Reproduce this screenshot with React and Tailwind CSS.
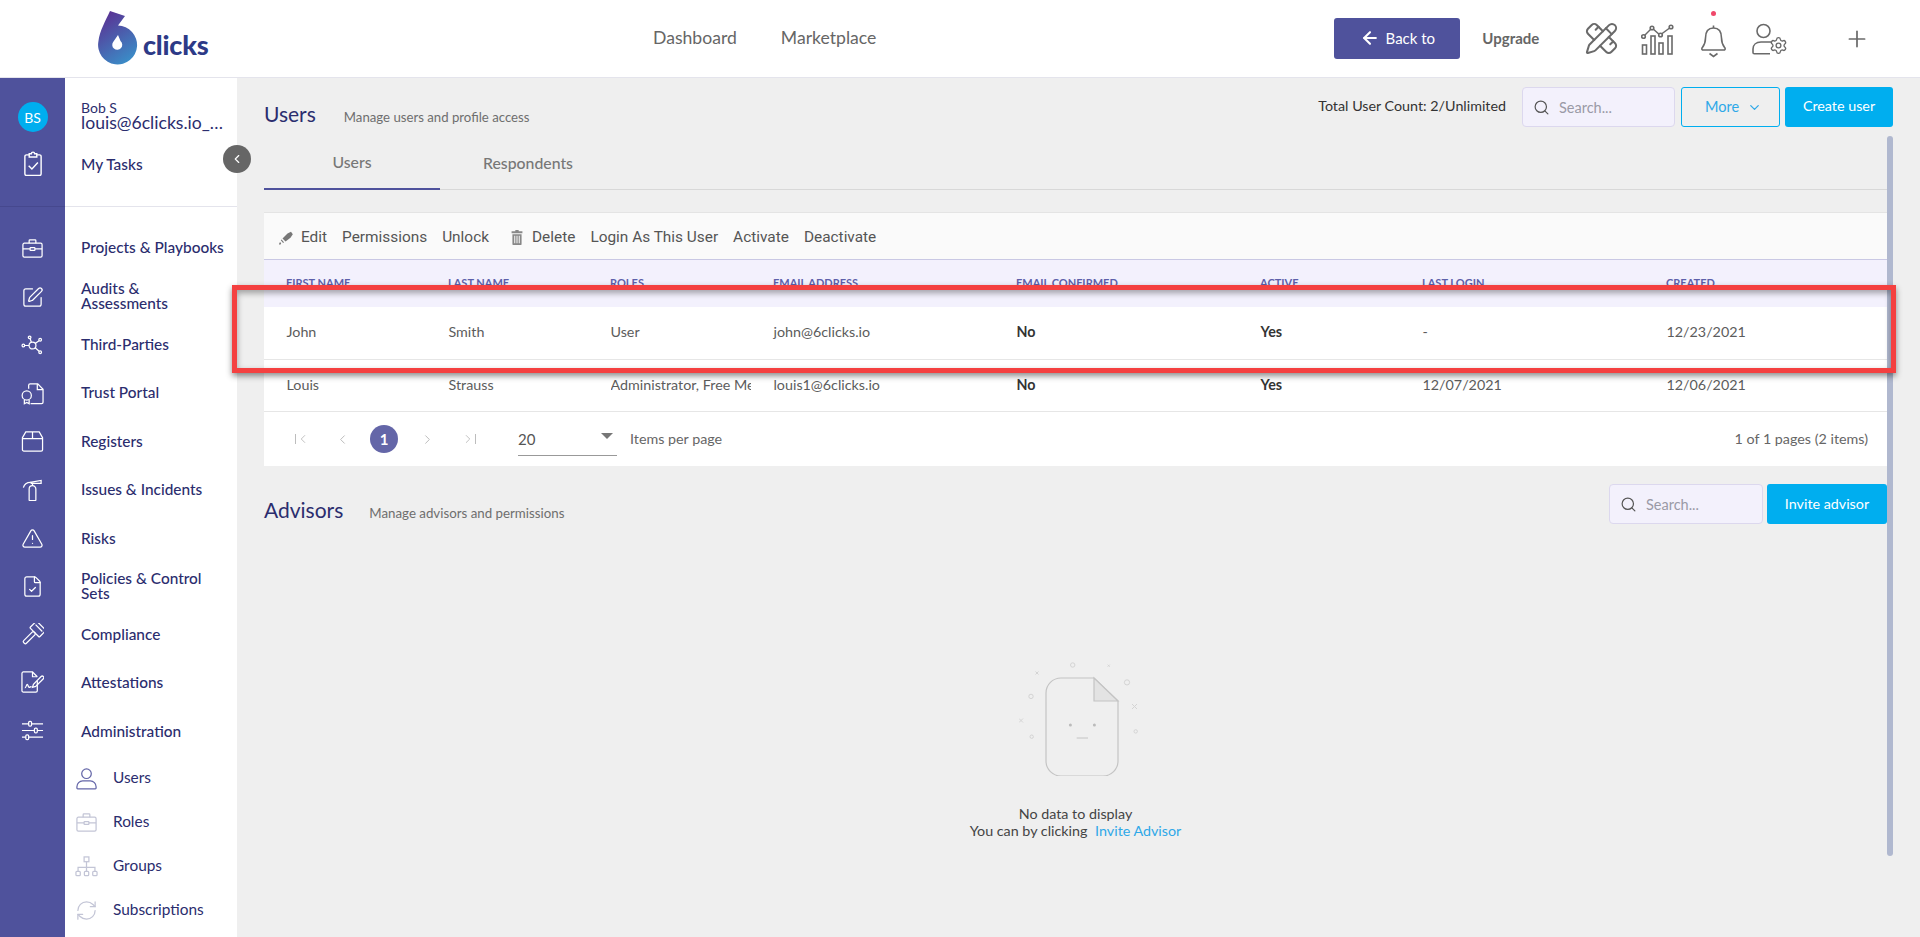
import React from 'react';
import {
  ArrowLeft, ChevronDown, ChevronLeft, ChevronRight,
  FileCheck, PencilRuler, Plus, RefreshCw, Search,
  Settings, SquarePen, TriangleAlert,
} from 'lucide-react';

const LATO = "font-['Lato','Liberation_Sans',sans-serif]";

function ClipboardIcon(props) {
  return (
    <svg viewBox="0 0 24 24" fill="none" stroke="currentColor" strokeWidth="1.300" {...props}>
      <path d="M8.500 4.500H6A1.500 1.500 0 0 0 4.500 6v16A1.500 1.500 0 0 0 6 23.500h12a1.500 1.500 0 0 0 1.500-1.500V6A1.500 1.500 0 0 0 18 4.500h-2.500" />
      <path d="M8.500 3.500h2a1.500 1.500 0 0 1 3 0h2v3h-7z" />
      <path d="m8 14.500 3 3 5.500-6" />
    </svg>
  );
}

function CaseIcon(props) {
  return (
    <svg viewBox="0 0 24 24" fill="none" stroke="currentColor" strokeWidth="1.300" {...props}>
      <rect x="2" y="6.500" width="20" height="14.500" rx="1.500" />
      <path d="M8.500 6.500V3.800A.8.800 0 0 1 9.300 3h5.400a.8.800 0 0 1 .8.800v2.700" />
      <path d="M2 12.500h7.500M14.500 12.500H22" />
      <rect x="9.500" y="11" width="5" height="3" rx=".5" />
    </svg>
  );
}

function HubIcon(props) {
  return (
    <svg viewBox="0 0 24 24" fill="none" stroke="currentColor" strokeWidth="1.300" {...props}>
      <circle cx="12" cy="12" r="3.600" />
      <circle cx="9" cy="3.500" r="1.400" />
      <circle cx="20" cy="6" r="1.400" />
      <circle cx="2.500" cy="12" r="1.400" />
      <circle cx="20" cy="19" r="1.400" />
      <path d="M9.600 5 10.800 8.600M18.800 7 14.800 10M4 12h4.400M14.800 14.400 18.900 18" />
    </svg>
  );
}

function SealDocIcon(props) {
  return (
    <svg viewBox="0 0 24 24" fill="none" stroke="currentColor" strokeWidth="1.300" {...props}>
      <path d="M8 7V3.500A1.500 1.500 0 0 1 9.500 2h8L23 7.500V21a1.500 1.500 0 0 1-1.500 1.500H10" />
      <path d="M17 2v6h6" />
      <circle cx="6" cy="14" r="4.800" />
      <path d="M3.500 18.500v4.200l2.500-1.400 2.500 1.400v-4.200" />
    </svg>
  );
}

function BoxIcon(props) {
  return (
    <svg viewBox="0 0 24 24" fill="none" stroke="currentColor" strokeWidth="1.300" {...props}>
      <path d="M5 2h14l3.500 6v12.500A1.500 1.500 0 0 1 21 22H3a1.500 1.500 0 0 1-1.500-1.500V8z" />
      <path d="M1.500 9h21M12 2v7" />
    </svg>
  );
}

function ExtinguisherIcon(props) {
  return (
    <svg viewBox="0 0 24 24" fill="none" stroke="currentColor" strokeWidth="1.300" {...props}>
      <path d="M8.500 23V11.500a3.500 3.500 0 0 1 7 0V23a.5.5 0 0 1-.5.5H9a.5.5 0 0 1-.5-.5z" />
      <path d="M12 8V4M9.500 4.500 21 2.500v3L10 5.500" />
      <path d="M10 4.500C7 4.500 3.500 6 2.500 10" />
    </svg>
  );
}

function GavelIcon(props) {
  return (
    <svg viewBox="0 0 24 24" fill="none" stroke="currentColor" strokeWidth="1.300" {...props}>
      <g transform="rotate(45 12 12)">
        <rect x="5" y="-1" width="14" height="10" rx="1" />
        <path d="M7 2.500h10" />
        <rect x="10" y="9" width="4" height="15.500" rx="1.500" />
      </g>
    </svg>
  );
}

function SignDocIcon(props) {
  return (
    <svg viewBox="0 0 24 24" fill="none" stroke="currentColor" strokeWidth="1.300" {...props}>
      <path d="M17 10.500v10a1.500 1.500 0 0 1-1.500 1.500h-13A1.500 1.500 0 0 1 1 20.500v-18A1.500 1.500 0 0 1 2.500 1H12l5 5" />
      <path d="M12 1v5h5" />
      <path d="M4 17.500c1.500 0 1.500-3.500 2.500-3.500s.8 3 2 3 1.300-1 2.500-.8" />
      <path d="m12 17 1-3.200 8-8a1.600 1.600 0 0 1 2.300 2.300l-8 8z" />
    </svg>
  );
}

function SlidersIcon(props) {
  return (
    <svg viewBox="0 0 24 24" fill="none" stroke="currentColor" strokeWidth="1.300" {...props}>
      <path d="M1 5h7M11 5h12M1 12h13M17 12h6M1 19h4M8 19h15" />
      <rect x="8" y="2.500" width="3" height="5" rx="1.200" />
      <rect x="14" y="9.500" width="3" height="5" rx="1.200" />
      <rect x="5" y="16.500" width="3" height="5" rx="1.200" />
    </svg>
  );
}

function ChartIcon(props) {
  return (
    <svg viewBox="0 0 34 32" fill="none" stroke="currentColor" strokeWidth="1.600" {...props}>
      <path d="M2 14 11 5l8 7 11-8" strokeWidth="1.400" />
      <circle cx="2.500" cy="13.500" r="1.800" fill="#fff" />
      <circle cx="11" cy="5" r="1.800" fill="#fff" />
      <circle cx="19.500" cy="12" r="1.800" fill="#fff" />
      <circle cx="30" cy="4" r="1.800" fill="#fff" />
      <rect x="1.500" y="22" width="4" height="9" />
      <rect x="10" y="13" width="4" height="18" />
      <rect x="18" y="20" width="4" height="11" />
      <rect x="27" y="13" width="4" height="18" />
    </svg>
  );
}

function BellIcon(props) {
  return (
    <svg viewBox="0 0 26 36" fill="none" stroke="currentColor" strokeWidth="1.600" {...props}>
      <path d="M13 5C7 5 5 10 5 15c0 6-2 8-3.500 10-.5 1.200 0 2 1.500 2h20c1.500 0 2-.8 1.500-2C23 23 21 21 21 15c0-5-2-10-8-10z" />
      <path d="M13 5V2.500M9 30.500l4 3 4-3" />
    </svg>
  );
}

function UserGearIcon(props) {
  return (
    <svg viewBox="0 0 37 32" fill="none" stroke="currentColor" strokeWidth="1.600" {...props}>
      <circle cx="12.500" cy="8" r="6.500" />
      <path d="M20 19h-10c-5 0-8 3-8 7v3.500c0 .8.500 1.300 1.300 1.300H19" />
      <Settings x="18" y="13" width="19" height="19" strokeWidth="1.700" />
    </svg>
  );
}

function UserOutline(props) {
  return (
    <svg viewBox="0 0 24 24" fill="none" stroke="currentColor" strokeWidth="1.400" {...props}>
      <circle cx="12" cy="7" r="5" />
      <path d="M8 14.500h8a6 6 0 0 1 6 6v1.500a.8.800 0 0 1-.8.800H2.800A.8.800 0 0 1 2 22v-1.500a6 6 0 0 1 6-6z" />
    </svg>
  );
}

function OrgIcon(props) {
  return (
    <svg viewBox="0 0 24 24" fill="none" stroke="currentColor" strokeWidth="1.300" {...props}>
      <rect x="9.500" y="2" width="5" height="5" />
      <rect x="1" y="17" width="4.500" height="4.500" rx="1" />
      <rect x="9.800" y="17" width="4.500" height="4.500" rx="1" />
      <rect x="18.500" y="17" width="4.500" height="4.500" rx="1" />
      <path d="M12 7v10M3.200 17v-4h17.600v4" />
    </svg>
  );
}

function PencilSolid(props) {
  return (
    <svg viewBox="0 0 16 16" fill="#777" {...props}>
      <path d="M9.500 3.500 13 1.800l1.800 2.500-2 3-1.300 1.200-4 3-3-3z" />
      <path d="M3.600 9.500 2.800 10.300l2.300 2.600.900-.7zM1 14l1-2 1.200 1.300L2 15z" />
    </svg>
  );
}

function TrashSolid(props) {
  return (
    <svg viewBox="0 0 14 18" fill="#888" {...props}>
      <path d="M5 0h4v1.500h4.500V4H.5V1.500H5zM1.500 5h11v12.200a.8.800 0 0 1-.8.800H2.300a.8.800 0 0 1-.8-.8zm2.200 2v9h1.200V7zm2.700 0v9h1.200V7zm2.700 0v9h1.200V7z" />
    </svg>
  );
}

function Logo() {
  return (
    <div className="flex items-center ml-[98px]">
      <svg viewBox="0 0 40 54" className="w-[40px] h-[54px] mt-[-2px]">
        <defs>
          <linearGradient id="six" x1="0.2" y1="0" x2="0.7" y2="1">
            <stop offset="0" stopColor="#5b2f92" />
            <stop offset="1" stopColor="#3a8ec8" />
          </linearGradient>
        </defs>
        <path d="M12 0 27 5 20 14.500A19.500 19.500 0 1 1 .4 30.500C1.500 20 8 9 12 0Z" fill="url(#six)" />
        <path d="M20 24 22.500 30A5 5 0 1 1 15.500 30.500Z" fill="#fff" />
      </svg>
      <span className={`${LATO} font-black text-[27px] leading-none text-[#2d3a87] ml-[5px] mt-[11px] tracking-[-0.2px]`}>clicks</span>
    </div>
  );
}

function TopBar() {
  return (
    <header className="h-[78px] shrink-0 bg-white border-b border-[#e4e4ec] flex items-center relative">
      <div className="w-[653px] shrink-0"><Logo /></div>
      <nav className={`${LATO} flex gap-[44px] text-[17.600px] text-[#666]`}>
        <span>Dashboard</span>
        <span>Marketplace</span>
      </nav>
      <div className="ml-[458px] w-[126px] h-[41px] bg-[#4f529c] rounded-[3px] flex items-center justify-center gap-[6px] text-white mt-[-1px]">
        <ArrowLeft size={20} strokeWidth={2.500} />
        <span className={`${LATO} text-[15px]`}>Back to</span>
      </div>
      <span className={`${LATO} font-bold text-[15px] text-[#666] ml-[22px]`}>Upgrade</span>
      <div className="flex items-center text-[#6a6a6a] ml-[45px]">
        <PencilRuler size={35} strokeWidth={1.400} />
        <ChartIcon className="w-[34px] h-[32px] ml-[22px]" />
        <div className="relative ml-[25px]">
          <BellIcon className="w-[27px] h-[36px] mt-[4px]" />
          <span className="absolute top-[-8px] left-[11px] w-[5px] h-[5px] rounded-full bg-[#f0476a]" />
        </div>
        <UserGearIcon className="w-[37px] h-[32px] ml-[24px]" />
        <Plus size={26} strokeWidth={1.600} className="ml-[56px]" />
      </div>
    </header>
  );
}

const railItems = [
  { Icon: CaseIcon, h: 'h-[49px]' },
  { Icon: SquarePen, h: 'h-[48px]' },
  { Icon: HubIcon, h: 'h-[48px]' },
  { Icon: SealDocIcon, h: 'h-[48px]' },
  { Icon: BoxIcon, h: 'h-[48px]' },
  { Icon: ExtinguisherIcon, h: 'h-[49px]' },
  { Icon: TriangleAlert, h: 'h-[48px]' },
  { Icon: FileCheck, h: 'h-[48px]' },
  { Icon: GavelIcon, h: 'h-[48px]' },
  { Icon: SignDocIcon, h: 'h-[48px]' },
  { Icon: SlidersIcon, h: 'h-[49px]' },
];

function Rail() {
  return (
    <aside className="w-[65px] shrink-0 bg-[#4f529c] text-white flex flex-col">
      <div className="h-[129px] shrink-0 border-b border-[#46488e] flex flex-col items-center pt-[24px]">
        <div className={`${LATO} w-[30px] h-[30px] rounded-full bg-[#00aeef] flex items-center justify-center text-[14px]`}>BS</div>
        <ClipboardIcon width={26} height={26} className="mt-[18px]" />
      </div>
      <div className="pt-[17px] flex flex-col">
        {railItems.map(({ Icon, h }, i) => (
          <div key={i} className={`${h} flex items-center justify-center pr-[1px]`}>
            <Icon width={23} height={23} strokeWidth={1.300} />
          </div>
        ))}
      </div>
    </aside>
  );
}

const menu = [
  { label: 'Projects & Playbooks', h: 'h-[48px]' },
  { label: 'Audits &\nAssessments', h: 'h-[49px]' },
  { label: 'Third-Parties', h: 'h-[48px]' },
  { label: 'Trust Portal', h: 'h-[49px]' },
  { label: 'Registers', h: 'h-[48px]' },
  { label: 'Issues & Incidents', h: 'h-[49px]' },
  { label: 'Risks', h: 'h-[48px]' },
  { label: 'Policies & Control\nSets', h: 'h-[48px]' },
  { label: 'Compliance', h: 'h-[48px]' },
  { label: 'Attestations', h: 'h-[49px]' },
  { label: 'Administration', h: 'h-[49px]' },
];

const subMenu = [
  { label: 'Users', Icon: UserOutline, cls: 'text-[#6466a8]' },
  { label: 'Roles', Icon: CaseIcon, cls: 'text-[#c3c5d6]' },
  { label: 'Groups', Icon: OrgIcon, cls: 'text-[#c3c5d6]' },
  { label: 'Subscriptions', Icon: RefreshCw, cls: 'text-[#c3c5d6]' },
];

function Panel() {
  return (
    <aside className={`${LATO} w-[172px] shrink-0 bg-white relative text-[#2b2d6e]`}>
      <div className="h-[129px] border-b border-[#e4e4ec] pl-[16px] pt-[23px] relative">
        <div className="text-[14px] leading-[14px]">Bob S</div>
        <div className="text-[17.600px] leading-[18px] truncate w-[146px] mt-[-1px]">louis@6clicks.io_info</div>
        <div className="text-[15.400px] font-medium mt-[23px] leading-[18px]">My Tasks</div>
      </div>
      <div className="absolute top-[67px] left-[158px] w-[28px] h-[28px] rounded-full bg-[#666] text-white flex items-center justify-center z-10">
        <ChevronLeft size={14} />
      </div>
      <div className="pt-[16px]">
        {menu.map(m => (
          <div key={m.label} className={`${m.h} pl-[16px] pr-[6px] flex items-center text-[15.400px] leading-[15px] font-medium whitespace-pre-line`}>
            {m.label}
          </div>
        ))}
      </div>
      <div className="flex flex-col">
        {subMenu.map(({ label, Icon, cls }) => (
          <div key={label} className="h-[44px] flex items-center pl-[10px] text-[15.400px]">
            <span className={`${cls} w-[23px] flex justify-center`}>
              <Icon width={23} height={23} strokeWidth={1.300} />
            </span>
            <span className="ml-[15px]">{label}</span>
          </div>
        ))}
      </div>
    </aside>
  );
}

function SearchBox({ w }) {
  return (
    <div className={`${w} h-[40px] bg-[#f3f1fc] border border-[#dcd8ee] rounded-[4px] flex items-center pl-[10px] gap-[9px]`}>
      <Search size={17} strokeWidth={1.700} className="text-[#555]" />
      <span className={`${LATO} text-[14.500px] text-[#9a9aa6] mt-[2px]`}>Search...</span>
    </div>
  );
}

const columns = ['FIRST NAME', 'LAST NAME', 'ROLES', 'EMAIL ADDRESS', 'EMAIL CONFIRMED', 'ACTIVE', 'LAST LOGIN', 'CREATED'];

const rows = [
  { h: 'h-[53px]', cells: ['John', 'Smith', 'User', 'john@6clicks.io', 'No', 'Yes', '-', '12/23/2021'] },
  { h: 'h-[52px]', cells: ['Louis', 'Strauss', 'Administrator, Free Member', 'louis1@6clicks.io', 'No', 'Yes', '12/07/2021', '12/06/2021'] },
];

const GRID = 'grid grid-cols-[162px_162px_163px_243px_244px_162px_244px_1fr]';

function UsersTable() {
  return (
    <div className="bg-white">
      <div className="h-[48px] bg-[#fafafa] border-t border-[#e4e4e4] border-b border-b-[#c9c8e4] flex items-center pl-[14px] pt-[3px] text-[15.400px] text-[#555] font-['Roboto',sans-serif]">
        <PencilSolid className="w-[16px] h-[16px]" />
        <span className="ml-[7px]">Edit</span>
        <span className="ml-[15px]">Permissions</span>
        <span className="ml-[15px]">Unlock</span>
        <TrashSolid className="w-[12px] h-[15px] ml-[22px]" />
        <span className="ml-[9px]">Delete</span>
        <span className="ml-[15px]">Login As This User</span>
        <span className="ml-[15px]">Activate</span>
        <span className="ml-[15px]">Deactivate</span>
      </div>
      <div className={`${GRID} ${LATO} h-[47px] bg-[#f3f1fd] pt-[15px] pl-[22px] text-[11px] font-bold text-[#5d60aa] leading-[16px]`}>
        {columns.map(c => <div key={c}>{c}</div>)}
      </div>
      {rows.map(row => (
        <div key={row.cells[0]} className={`${GRID} ${LATO} ${row.h} pl-[22.500px] border-b border-[#e6e6e6] items-center text-[14.300px] text-[#5c5c5c] pb-[2px]`}>
          {row.cells.map((cell, i) => (
            <div key={i} className={i === 4 || i === 5 ? 'font-bold text-[#333]' : i === 2 ? 'w-[140px] overflow-hidden whitespace-nowrap' : ''}>
              {cell}
            </div>
          ))}
        </div>
      ))}
      <div className={`${LATO} h-[54px] flex items-center text-[14.300px] text-[#666]`}>
        <div className="flex items-center text-[#bdbdbd] ml-[31px]">
          <span className="flex items-center"><span className="w-px h-[10px] bg-[#bdbdbd]" /><ChevronLeft size={14} strokeWidth={1.600} /></span>
          <ChevronLeft size={15} strokeWidth={1.600} className="ml-[25px]" />
          <span className="w-[28px] h-[28px] rounded-full bg-[#6466a8] text-white font-bold text-[15px] flex items-center justify-center ml-[20px]">1</span>
          <ChevronRight size={15} strokeWidth={1.600} className="ml-[22px]" />
          <span className="flex items-center ml-[26px]"><ChevronRight size={14} strokeWidth={1.600} /><span className="w-px h-[10px] bg-[#bdbdbd]" /></span>
        </div>
        <div className="relative ml-[42px] w-[99px] h-[32px] border-b border-[#999] flex items-center text-[15px] text-[#555] mt-[2px]">
          20
          <span className="absolute right-[4px] top-[9px] w-0 h-0 border-x-[6px] border-x-transparent border-t-[6px] border-t-[#777]" />
        </div>
        <span className="ml-[13px]">Items per page</span>
        <span className="ml-auto mr-[19px]">1 of 1 pages (2 items)</span>
      </div>
    </div>
  );
}

function EmptyArt(props) {
  return (
    <svg viewBox="-5 0 125 115" fill="none" stroke="#d4d4d4" strokeWidth="1" {...props}>
      <path d="M70 17H37a15 15 0 0 0-15 15v68a15 15 0 0 0 15 15h42a15 15 0 0 0 15-15V40z" stroke="#c4c4c4" strokeWidth="1.200" />
      <path d="M70 17v23h24z" fill="#e3e3e3" stroke="#c4c4c4" strokeWidth="1.200" />
      <circle cx="46.400" cy="64" r="1.500" fill="#bbb" stroke="none" />
      <circle cx="70.400" cy="64" r="1.500" fill="#bbb" stroke="none" />
      <path d="M52.700 77h11.300" stroke="#c4c4c4" />
      <circle cx="48.700" cy="4" r="2.200" />
      <circle cx="7" cy="35.400" r="2.200" />
      <circle cx="103" cy="21.400" r="2.600" />
      <circle cx="7.700" cy="75.700" r="1.700" />
      <circle cx="111.700" cy="70.400" r="1.700" />
      <path d="M-5 57.500l4 4M-1 57.500l-4 4M11.500 10.500l3 3M14.500 10.500l-3 3M83.700 3.700l2 2M85.700 3.700l-2 2M108 43l5 5M113 43l-5 5" />
    </svg>
  );
}

function Main() {
  return (
    <main className="flex-1 min-w-0 bg-[#efefef] pl-[27px] pr-[33px] relative">
      <div className="h-[49px] pt-[9px] flex mr-[-6px]">
        <div className={`${LATO} flex items-baseline mt-[15px]`}>
          <h1 className="text-[21px] leading-[24px] text-[#2b2d6e]">Users</h1>
          <span className="text-[13.200px] text-[#6e6e6e] ml-[28px]">Manage users and profile access</span>
        </div>
        <div className={`${LATO} ml-auto flex items-start`}>
          <span className="text-[14.300px] text-[#333] mr-[16px] mt-[8px]">Total User Count: 2/Unlimited</span>
          <SearchBox w="w-[153px]" />
          <div className="w-[99px] h-[40px] ml-[6px] pl-[6px] border border-[#00aeef] rounded-[3px] text-[#2ea8e8] text-[14.500px] flex items-center justify-center gap-[8px]">
            More <ChevronDown size={15} />
          </div>
          <div className="w-[108px] h-[40px] ml-[5px] pb-[2px] bg-[#00aeef] rounded-[3px] text-white text-[14.300px] flex items-center justify-center">Create user</div>
        </div>
      </div>
      <div className={`${LATO} h-[63px] flex border-b border-[#d8d8d8] text-[15.800px] font-medium text-[#777]`}>
        <div className="w-[176px] h-[63px] pt-[8px] border-b-2 border-[#4f529c] flex items-center justify-center">Users</div>
        <div className="w-[176px] h-[63px] pt-[8px] flex items-center justify-center">Respondents</div>
      </div>
      <div className="h-[22px]" />
      <UsersTable />
      <div className="flex mt-[18px] h-[41px]">
        <div className={`${LATO} flex items-baseline mt-[14px]`}>
          <h2 className="text-[21px] leading-[24px] text-[#2b2d6e]">Advisors</h2>
          <span className="text-[13.300px] text-[#6e6e6e] ml-[26px]">Manage advisors and permissions</span>
        </div>
        <div className="ml-auto flex">
          <SearchBox w="w-[154px]" />
          <div className={`${LATO} w-[120px] h-[40px] ml-[4px] bg-[#00aeef] rounded-[3px] text-white text-[14.300px] flex items-center justify-center`}>Invite advisor</div>
        </div>
      </div>
      <div className={`${LATO} flex flex-col items-center mt-[136px] text-[14.300px] leading-[17px] text-[#444]`}>
        <EmptyArt className="w-[125px] h-[115px] ml-[11px]" />
        <div className="mt-[29px]">No data to display</div>
        <div>You can by clicking <span className="text-[#2ea8e8] ml-[4px]">Invite Advisor</span></div>
      </div>
      <div className="absolute top-[58px] right-[27px] w-[6px] h-[720px] rounded-full bg-[#b0b8cf]" />
    </main>
  );
}

export default function App() {
  return (
    <div className="w-[1920px] h-[937px] overflow-hidden flex flex-col relative">
      <TopBar />
      <div className="flex flex-1 min-h-0">
        <Rail />
        <Panel />
        <Main />
      </div>
      <div className="absolute left-[232px] top-[285px] w-[1664px] h-[88px] border-[5px] border-[#f44040] shadow-[0_3px_6px_rgba(0,0,0,0.45),inset_0_3px_6px_rgba(0,0,0,0.35)]" />
    </div>
  );
}
